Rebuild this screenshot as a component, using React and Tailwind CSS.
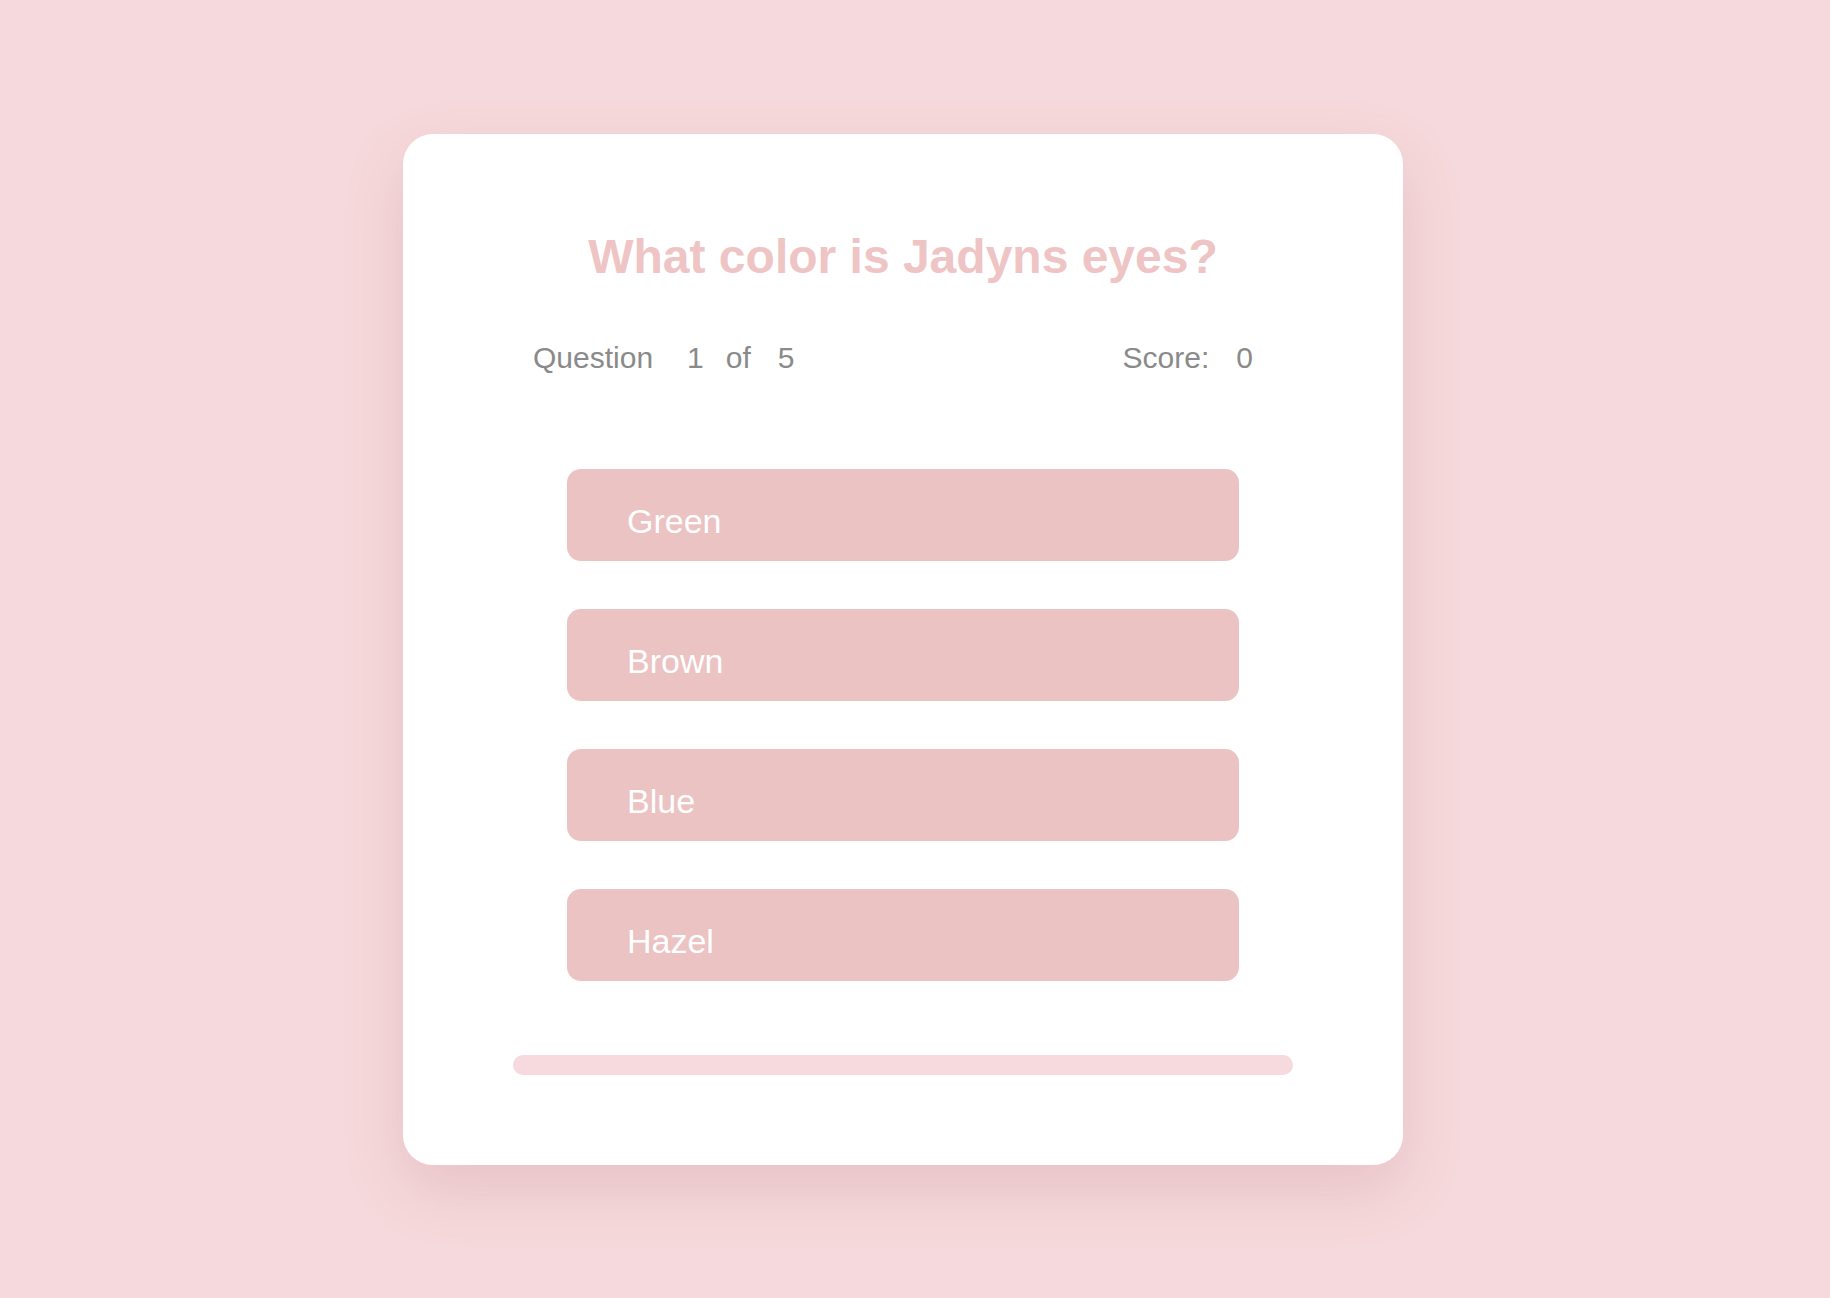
const ANSWERS = ['Green', 'Brown', 'Blue', 'Hazel']

export default function App() {
  return (
    <div
      className="min-h-screen w-full bg-[#f6d9dc] flex items-center justify-center pr-[24px]"
      style={{ fontFamily: '"Liberation Sans", Arial, Helvetica, sans-serif' }}
    >
      <div className="w-[1000px] bg-white rounded-[30px] shadow-[0_24px_60px_rgba(160,90,100,0.18)] flex flex-col items-center pt-[95px] pb-[90px]">
        <h1 className="text-[48px] leading-[55px] font-bold text-[#eec4c4] text-center">
          What color is Jadyns eyes?
        </h1>

        <div className="w-full mt-[57px] pl-[130px] pr-[150px] flex justify-between text-[30px] leading-[34px] text-[#8a8a8a]">
          <div className="flex items-baseline">
            <span>Question</span>
            <span className="ml-[34px]">1</span>
            <span className="ml-[22px]">of</span>
            <span className="ml-[27px]">5</span>
          </div>
          <div className="flex items-baseline">
            <span>Score:</span>
            <span className="ml-[27px]">0</span>
          </div>
        </div>

        <div className="mt-[94px] flex flex-col gap-[48px]">
          {ANSWERS.map(a => (
            <button
              key={a}
              className="w-[672px] h-[92px] rounded-[14px] bg-[#ebc3c3] text-white text-left text-[34px] leading-[39px] pl-[60px] pt-[33px] pb-[20px] flex items-start"
            >
              {a}
            </button>
          ))}
        </div>

        <div className="mt-[74px] w-[780px] h-[20px] rounded-[10px] bg-[#f6dadd]" />
      </div>
    </div>
  )
}
